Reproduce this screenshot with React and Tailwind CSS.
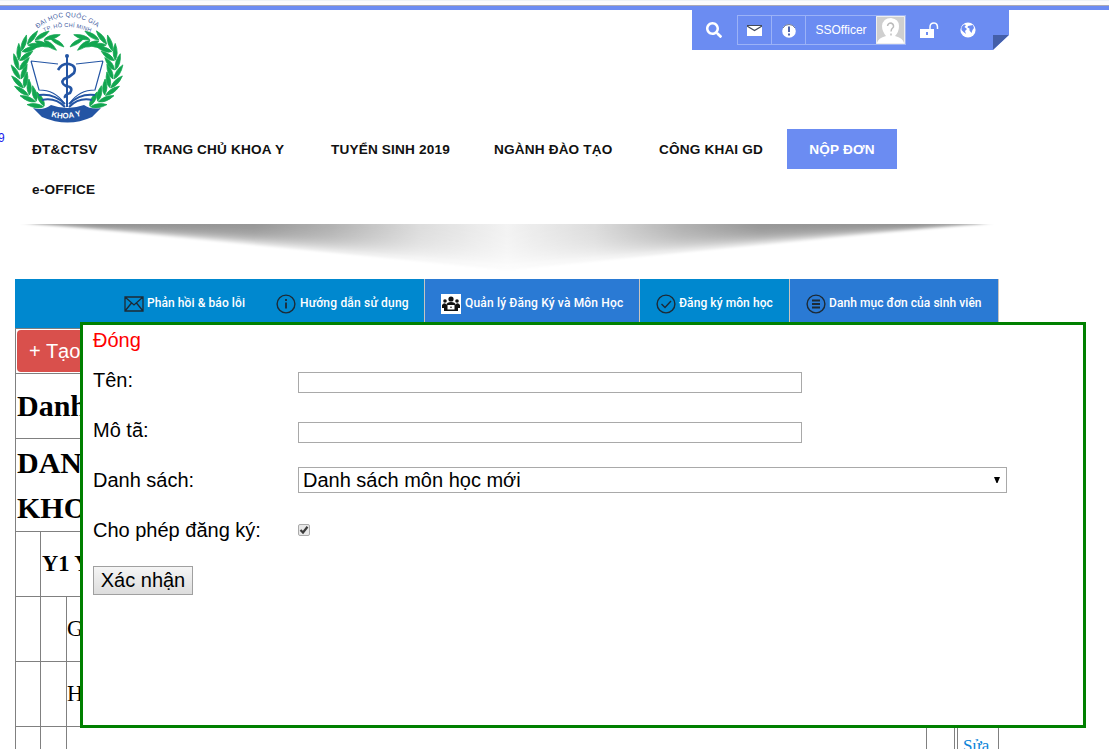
import React from "react";
import { FaSearch } from "react-icons/fa";

const arial = "font-['Liberation_Sans',Arial,sans-serif]";
const serif = "font-['Liberation_Serif','Times_New_Roman',serif]";

// Right half of the laurel wreath, mirrored for the left half.
const leaves = [
  [76, 31, -10], [85, 30, 6], [93, 32, 26], [100, 37, 46], [104, 45, 64],
  [106, 54, 80], [106, 63, 96], [104, 72, 108], [100, 80, 120],
  [94, 87, 132], [87, 93, 146],
];

function Wreath() {
  return (
    <g fill="#12a650" stroke="#12a650" strokeWidth=".7" strokeLinejoin="round">
      {leaves.map(([x, y, r], i) => (
        <g key={i} transform={`translate(${x} ${y}) rotate(${r + 180})`}>
          <path d="M-6 -.4Q2 0 8 -8Q-3 -7 -6 -.4Z" />
          <path d="M-6 .5Q-2 7 9 8Q3 .5 -6 .5Z" />
        </g>
      ))}
      <path d="M62 37Q65 30 76 28Q72 34 62 37Z" />
    </g>
  );
}

function Logo() {
  return (
    <svg width="120" height="115" viewBox="0 0 120 115" className="shrink-0">
      <defs>
        <path id="arcTop" d="M29.500 18.500Q59 -4.500 90 18" />
        <path id="arcLow" d="M36 22Q59 11.500 84 23" />
        <path id="ribbon" d="M43 106.500Q59 111.500 78 104" />
      </defs>
      <g fill="#3f609f" className="font-['Liberation_Sans',Arial,sans-serif]" fontSize="6.500">
        <text textLength="65"><textPath href="#arcTop">ĐẠI HỌC QUỐC GIA</textPath></text>
        <text fontSize="5.600" textLength="48"><textPath href="#arcLow">TP. HỒ CHÍ MINH</textPath></text>
      </g>
      <Wreath />
      <g transform="translate(118 0) scale(-1 1)"><Wreath /></g>
      <g fill="none" stroke="#2455a4" strokeWidth="1.200">
        <path d="M23 51L31 80Q47 80 56 93M23 51L50 54M95 51L87 80Q71 80 62 93M95 51L68 54" />
        <path d="M31 85Q46 83 57 94M34 90Q47 87 57 97M87 85Q72 83 61 94M84 90Q71 87 61 97" strokeWidth="2" />
        <path d="M59 47L59 97" strokeWidth="2" />
        <path d="M50 60Q54 53 61 54Q69 56 66 63Q62 67 56 69Q52 73 58 76Q66 77 62 83Q56 85 57 88" strokeWidth="2.600" />
      </g>
      <circle cx="59" cy="46" r="2" fill="#2455a4" />
      <path d="M25 98Q35 101 43 95Q59 101 76 95Q83 100 93 98L84 107Q60 118 34 107Z" fill="#2455a4" />
      <text fill="white" fontSize="8" fontWeight="700" className="font-['Liberation_Sans',Arial,sans-serif]" textLength="31">
        <textPath href="#ribbon">KHOA Y</textPath>
      </text>
    </svg>
  );
}

function Toolbar() {
  return (
    <div className={`ml-auto mr-[100px] flex h-10 w-[317px] items-start bg-[#6b8cf2] text-white [clip-path:polygon(0_0,100%_0,100%_25px,301px_100%,0_100%)] ${arial}`}>
      <FaSearch className="ml-[14px] mt-3 size-4" />
      <div className="ml-[15px] mt-[5px] flex h-[30px] w-[169px] border border-[#9bb2f7]">
        <div className="flex w-[34px] items-center justify-center border-r border-[#9bb2f7]">
          <svg width="15" height="11" viewBox="0 0 15 11"><path fill="white" d="M0 1H15V11H0Z" /><path d="M0 .5H15M0 1L7.500 5.500L15 1" fill="none" stroke="#444b5c" strokeWidth="1.200" /></svg>
        </div>
        <div className="flex w-[34px] items-center justify-center border-r border-[#9bb2f7] pt-[2px]">
          <svg width="14" height="14" viewBox="0 0 14 14"><circle cx="7" cy="7" r="6.800" fill="white" /><path d="M1 4Q3 .5 7 .5T13 4" fill="none" stroke="#4a5165" strokeWidth=".7" /><path d="M7 2.500V8M7 9.500V11.500" stroke="#4f62a8" strokeWidth="2" /></svg>
        </div>
        <div className="flex w-[70px] items-center justify-center text-xs">SSOfficer</div>
        <svg width="29" height="28" viewBox="0 0 29 28" className="shrink-0">
          <path fill="#cfcfcf" d="M0 0H29V28H0Z" />
          <path fill="white" d="M1 27Q2 22 10 20Q6 15 6 10Q7 2 15 2Q23 3 23 10Q23 16 19 20Q27 22 28 27Z" />
          <path d="M11.500 10Q12 7 15 7Q18 8 17.500 11Q15 13 15 15.500M15 17.500V19.500" fill="none" stroke="#bbb" strokeWidth="1.400" />
          <path d="M.5 .5H28.500V27.500H.5Z" fill="none" stroke="#eee" />
        </svg>
      </div>
      <svg width="19" height="17" viewBox="0 0 19 17" className="ml-[14px] mt-3">
        <path fill="white" d="M0 7H14V16H0Z" /><path d="M10 7V5Q10 1 14 1Q18 1 17.500 7" fill="none" stroke="white" strokeWidth="1.500" /><path d="M7 10V13" stroke="#6b8cf2" strokeWidth="2" />
      </svg>
      <svg width="16" height="16" viewBox="0 0 16 16" className="ml-[21px] mt-3">
        <circle cx="8" cy="8" r="7.600" fill="white" /><path fill="#6b8cf2" d="M1.500 5L4 2.500L6 3L4.500 5L7 7L5 9L6 12L3.500 10L1.500 8ZM8 4L13 3L14 6L12.500 8L11.500 11L9.500 8.500L9.500 6.500L7.500 5.500Z" />
      </svg>
      <svg width="16" height="15" viewBox="0 0 16 15" className="ml-auto mt-[25px]"><path d="M0 0H16L0 15Z" fill="#445fa9" /></svg>
    </div>
  );
}

const navItems = [
  ["ĐT&CTSV", "w-[112px]"],
  ["TRANG CHỦ KHOA Y", "w-[187px]"],
  ["TUYỂN SINH 2019", "w-[163px]"],
  ["NGÀNH ĐÀO TẠO", "w-[165px]"],
  ["CÔNG KHAI GD", "w-[128px]"],
];

function Nav() {
  return (
    <nav className={`flex h-20 flex-col text-[13.600px] font-bold leading-5 tracking-[0.17px] text-[#111] ${arial}`}>
      <div className="flex h-10 items-center pl-8">
        {navItems.map(([label, w]) => (
          <a key={label} className={`${w} shrink-0 whitespace-nowrap pt-[2px]`}>{label}</a>
        ))}
        <a className="flex h-10 w-[110px] items-center justify-center whitespace-nowrap bg-[#6b8cf2] pt-[2px] text-white">NỘP ĐƠN</a>
      </div>
      <div className="flex h-10 items-center pl-8 pt-[2px]">e-OFFICE</div>
    </nav>
  );
}

function Shade() {
  return (
    <svg width="974" height="55" viewBox="0 0 974 55" className="ml-5 block">
      <defs>
        <linearGradient id="shade" gradientUnits="userSpaceOnUse" x1="0" x2="974" y1="0" y2="0">
          <stop offset="0" stopColor="#aaa" />
          <stop offset=".08" stopColor="#858585" />
          <stop offset=".24" stopColor="#8a8a8a" />
          <stop offset=".32" stopColor="#a8a8a8" />
          <stop offset=".41" stopColor="#d8d8d8" />
          <stop offset=".5" stopColor="#f1f1f1" />
          <stop offset=".59" stopColor="#d8d8d8" />
          <stop offset=".68" stopColor="#a8a8a8" />
          <stop offset=".76" stopColor="#8a8a8a" />
          <stop offset=".92" stopColor="#858585" />
          <stop offset="1" stopColor="#aaa" />
        </linearGradient>
        <filter id="soft" x="-5%" y="-50%" width="110%" height="200%"><feGaussianBlur stdDeviation="6 1.300" /></filter>
        <mask id="wedge" maskUnits="userSpaceOnUse" x="0" y="0" width="974" height="55">
          <g filter="url(#soft)">
            {[8, 14, 20, 25, 30, 35, 40, 46].map((d) => (
              <path key={d} d={`M10 -6V0Q250 ${d * 0.46} 487 ${d}Q724 ${d * 0.46} 964 0V-6Z`} fill="white" fillOpacity=".24" />
            ))}
          </g>
        </mask>
      </defs>
      <rect width="974" height="55" fill="url(#shade)" mask="url(#wedge)" />
    </svg>
  );
}

function MenuIcon({ name }) {
  if (name === "people")
    return (
      <svg width="20" height="20" viewBox="0 0 20 20"><path fill="white" d="M0 0H20V20H0Z" /><g fill="#111"><circle cx="10" cy="5" r="2.600" /><circle cx="4" cy="7" r="1.800" /><circle cx="16" cy="7" r="1.800" /><path d="M5 11Q6 8 10 8T15 11V12H19V14H17V17H3V14H1V12H5ZM1 11Q3 8 5 10V12H1ZM19 11Q17 8 15 10V12H19Z" /></g><path fill="white" d="M6.500 11H13.500V15.500H6.500Z" /><circle cx="10" cy="13.200" r=".8" fill="#111" /></svg>
    );
  if (name === "mail")
    return <svg width="20" height="16" viewBox="0 0 20 16" fill="none" stroke="#1d2a35" strokeWidth="1.300"><path d="M1 1H19V15H1ZM1 1L10 9L19 1M1 15L7.500 7M19 15L12.500 7" /></svg>;
  return (
    <svg width="20" height="20" viewBox="0 0 20 20" fill="none" stroke="#1d2a35" strokeWidth="1.400">
      <circle cx="10" cy="10" r="8.900" />
      {name === "info" && <path d="M10 8.500V14.500M10 5V7" strokeWidth="1.800" />}
      {name === "check" && <path d="M5.500 10L9 13.500L15 7" />}
      {name === "list" && <path d="M6 6.500H14M6 10H14M6 13.500H14" strokeWidth="1.900" />}
    </svg>
  );
}

function MenuItem({ icon, label, className }) {
  return (
    <a className={`flex shrink-0 items-center whitespace-nowrap pb-[2px] ${className}`}>
      <span className="mt-[3px] flex w-5 shrink-0"><MenuIcon name={icon} /></span>
      <span>{label}</span>
    </a>
  );
}

function MenuBar() {
  return (
    <div className="ml-[15px] flex h-[49px] w-[984px] bg-[#0088cf] font-['Roboto',sans-serif] text-xs font-medium text-white">
      <div className="flex h-full w-[410px] shrink-0 border-r border-[#c8c4c0]">
        <MenuItem icon="mail" label="Phản hồi & báo lỗi" className="ml-[109px] w-[152px] gap-[3px] tracking-[0.08px]" />
        <MenuItem icon="info" label="Hướng dẫn sử dụng" className="gap-1 tracking-[0.19px]" />
      </div>
      <MenuItem icon="people" label="Quản lý Đăng Ký và Môn Học" className="w-[215px] gap-1 border-r border-[#c8c4c0] bg-[#2a7ad4] pl-4 tracking-[0.17px]" />
      <MenuItem icon="check" label="Đăng ký môn học" className="w-[150px] gap-[3px] border-r border-[#c8c4c0] pl-4 tracking-[0.08px]" />
      <MenuItem icon="list" label="Danh mục đơn của sinh viên" className="w-[209px] gap-[3px] border-r border-[#c8c4c0] bg-[#2a7ad4] pl-4 tracking-[0.06px]" />
    </div>
  );
}

function CourseTable() {
  return (
    <div className={`ml-[15px] w-[984px] border border-b-0 border-[#808080] text-black ${serif}`}>
      <div className="flex h-[45px] border-b border-[#808080] p-px">
        <button className={`flex h-[42px] w-[180px] items-center rounded bg-[#d9504c] pl-[12px] text-left text-[20px] text-white ${arial}`}>+ Tạo</button>
      </div>
      <div className="flex h-[65px] items-center border-b border-[#808080] pb-px pl-px text-[30px] font-bold">Danh</div>
      <div className="flex h-[93px] flex-col justify-center border-b border-[#808080] pl-px text-[30px] font-bold leading-[45px]">
        <span>DANH</span><span>KHOA</span>
      </div>
      <div className="flex h-[65px] border-b border-[#808080]">
        <div className="w-[25px] border-r border-[#808080]" />
        <div className="flex items-center pl-px text-[22.500px] font-bold">Y1 Y</div>
      </div>
      {["G", "H"].map((t) => (
        <div key={t} className="flex h-[65px] border-b border-[#808080]">
          <div className="w-[25px] border-r border-[#808080]" />
          <div className="w-[26px] border-r border-[#808080]" />
          <div className="flex items-center text-[22.500px]">{t}</div>
        </div>
      ))}
      <div className="flex h-[22px] overflow-hidden">
        <div className="w-[25px] border-r border-[#808080]" />
        <div className="w-[26px] border-r border-[#808080]" />
        <div className="w-[860px] border-r border-[#808080]" />
        <div className="w-[28px] border-r border-[#808080]" />
        <div className="w-[3px] border-r border-[#808080]" />
        <a className="pl-[5px] pt-[9px] text-[17px] leading-5 text-[#0a84d8]">Sửa</a>
      </div>
    </div>
  );
}

function Field({ label, children }) {
  return (
    <div className="flex h-[50px] items-start">
      <label className="w-[205px] shrink-0 whitespace-nowrap leading-[30px]">{label}</label>
      {children}
    </div>
  );
}

function Dialog() {
  return (
    <div className={`absolute left-20 top-[322px] h-[406px] w-[1006px] border-[3px] border-[#008000] bg-white pl-[10px] text-[20px] text-black ${arial}`}>
      <div className="h-10 leading-[30px] text-[#ff0000]">Đóng</div>
      <Field label="Tên:"><input className="mt-[7px] h-[21px] w-[504px] border border-[#a9a9a9]" /></Field>
      <Field label="Mô tã:"><input className="mt-[7px] h-[21px] w-[504px] border border-[#a9a9a9]" /></Field>
      <Field label="Danh sách:">
        <div className="mt-[2px] flex h-[26px] w-[709px] items-center justify-between border border-[#a9a9a9] pl-1 pr-[6px]">
          <span>Danh sách môn học mới</span>
          <svg width="6" height="6" viewBox="0 0 6 6"><path d="M0 0H6L3.500 6H2.500Z" /></svg>
        </div>
      </Field>
      <Field label="Cho phép đăng ký:">
        <svg width="12" height="12" viewBox="0 0 12 12" className="mt-[9px]">
          <rect x=".5" y=".5" width="11" height="11" rx="1.500" fill="#e8e8e8" stroke="#aaa" />
          <path d="M2.500 6L5 8.500L9.500 2.800" fill="none" stroke="#3b3b3b" strokeWidth="2.200" />
        </svg>
      </Field>
      <button className="mt-px flex h-[29px] w-[100px] items-center justify-center border border-[#a0a0a0] bg-linear-to-b from-[#f5f5f5] to-[#dddddd] pb-[2px]">Xác nhận</button>
    </div>
  );
}

export default function App() {
  return (
    <div className="relative flex h-[749px] w-[1109px] flex-col overflow-hidden bg-white">
      <div className="h-[5px] shrink-0 border-t border-[#edf2f6] bg-[#fbfcfc]" />
      <div className="h-[5px] shrink-0 border-t border-[#aaa9b5] bg-[#6b8cf2]" />
      <header className="flex h-[119px] shrink-0 items-start pl-2">
        <Logo />
        <Toolbar />
      </header>
      <span className={`absolute left-[-2px] top-[130px] text-xs leading-4 text-[#1a1aee] ${arial}`}>9</span>
      <Nav />
      <div className="h-[70px] shrink-0 pt-[15px]"><Shade /></div>
      <MenuBar />
      <CourseTable />
      <Dialog />
    </div>
  );
}
